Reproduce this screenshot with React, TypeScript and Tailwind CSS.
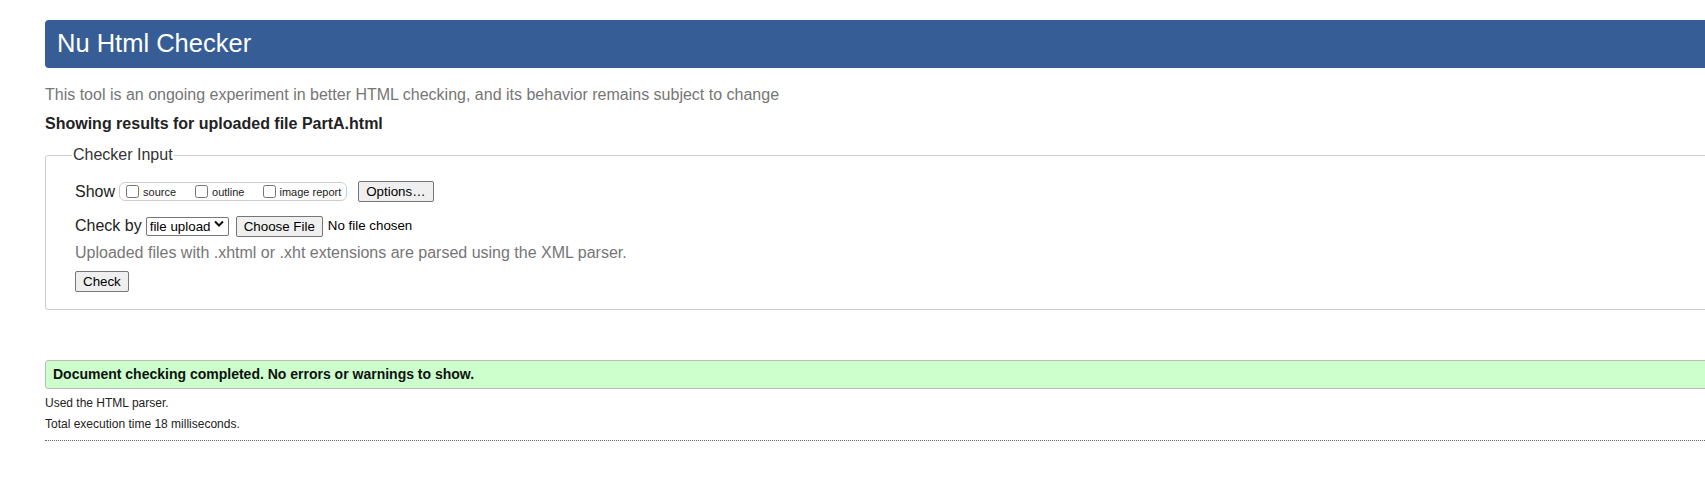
export default function App() {
  return (
    <div className="h-[487px] w-[1705px] overflow-hidden bg-white font-['Liberation_Sans',Arial,sans-serif] text-[#222]">
      <div className="ml-[45px] w-[1700px] pt-[20px]">
        <h1 className="h-[48px] rounded-[4px] bg-[#365d95] pl-[12px] text-[25.5px] leading-[47px] font-normal text-white">
          Nu Html Checker
        </h1>

        <p className="mt-[18px] text-[16px] leading-[18px] text-[#767676]">
          This tool is an ongoing experiment in better HTML checking, and its behavior remains subject to change
        </p>

        <p className="mt-[11px] text-[16px] font-bold leading-[18px] text-[#222]">
          Showing results for uploaded file PartA.html
        </p>

        <fieldset className="mt-[13px] rounded-[3px] border border-[#cccccc] pb-[17px] pl-[26px]">
          <legend className="px-[1px] text-[16px] leading-[18px] text-[#333]">Checker Input</legend>

          <div className="pl-[3px]">
            <div className="mt-[16px] flex h-[22px] items-center">
              <span className="pt-[1px] text-[16px] leading-[18px] text-[#222]">Show</span>
              <div className="ml-[4px] flex h-[19px] items-center rounded-[6px] border border-[#cccccc] pl-[6px] pr-[5px] text-[11px] leading-[13px] text-[#222]">
                <label className="flex items-center">
                  <input type="checkbox" className="m-0 h-[13px] w-[13px]" />
                  <span className="ml-[4px] pt-[2px]">source</span>
                </label>
                <label className="ml-[19px] flex items-center">
                  <input type="checkbox" className="m-0 h-[13px] w-[13px]" />
                  <span className="ml-[4px] pt-[2px]">outline</span>
                </label>
                <label className="ml-[19px] flex items-center">
                  <input type="checkbox" className="m-0 h-[13px] w-[13px]" />
                  <span className="ml-[3px] pt-[2px]">image report</span>
                </label>
              </div>
              <button
                type="button"
                className="ml-[11px] h-[21px] rounded-[2px] border border-[#767676] bg-[#efefef] px-[7px] text-[13.33px] leading-[19px] text-black"
              >
                Options…
              </button>
            </div>

            <div className="mt-[13px] flex h-[22px] items-center">
              <span className="text-[16px] leading-[18px] text-[#222]">Check by</span>
              <div className="relative ml-[4px]">
                <select className="h-[19px] w-[83px] appearance-none rounded-[2px] border border-[#767676] bg-white pl-[3px] text-[13.33px] leading-[17px] text-black">
                  <option>file upload</option>
                </select>
                <svg
                  className="pointer-events-none absolute right-[5px] top-[6px]"
                  width="10"
                  height="7"
                  viewBox="0 0 10 7"
                >
                  <path d="M1 1.5 L5 5.5 L9 1.5" fill="none" stroke="#111" strokeWidth="2" />
                </svg>
              </div>
              <button
                type="button"
                className="ml-[7px] h-[21px] rounded-[2px] border border-[#767676] bg-[#efefef] px-[7px] text-[13.33px] leading-[19px] text-black"
              >
                Choose File
              </button>
              <span className="ml-[5px] text-[13.33px] leading-[16px] text-black">No file chosen</span>
            </div>

            <p className="mt-[7px] text-[16px] leading-[18px] text-[#767676]">
              Uploaded files with .xhtml or .xht extensions are parsed using the XML parser.
            </p>

            <div className="mt-[8px] flex h-[22px] items-center">
              <button
                type="submit"
                className="h-[21px] rounded-[2px] border border-[#767676] bg-[#efefef] px-[7px] text-[13.33px] leading-[19px] text-black"
              >
                Check
              </button>
            </div>
          </div>
        </fieldset>

        <div className="mt-[50px] h-[29px] rounded-[3px] border border-[#bbbbbb] bg-[#ccffcc] pl-[7px] text-[14px] font-bold leading-[27px] text-[#111]">
          Document checking completed. No errors or warnings to show.
        </div>

        <p className="mt-[7px] text-[12px] leading-[14px] text-[#222]">Used the HTML parser.</p>
        <p className="mt-[7px] text-[12px] leading-[14px] text-[#222]">Total execution time 18 milliseconds.</p>

        <div className="mt-[9px] border-t border-dotted border-[#666]" />
      </div>
    </div>
  );
}
